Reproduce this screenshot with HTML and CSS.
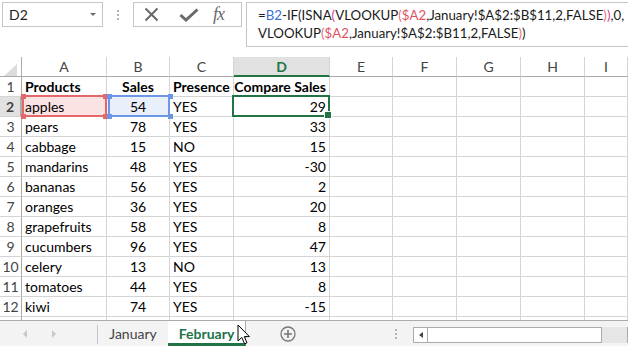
FILE: index.html
```html
<!DOCTYPE html>
<html lang="en">
<head>
    <meta charset="UTF-8">
    <title>February - Compare Sales</title>
    <link rel="stylesheet" href="styles.css">
</head>
<body>
    <!-- Name box + formula bar -->
    <div class="topbar">
        <div class="namebox">
            <span>D2</span>
            <span class="caret"></span>
        </div>
        <div class="grip"><i></i><i></i><i></i></div>
        <div class="fx-buttons">
            <svg class="ico-x" width="15" height="15" viewBox="0 0 15 15"><path d="M1.5 1.5 L13.5 13.5 M13.5 1.5 L1.5 13.5" stroke="#6a6a6a" stroke-width="2" fill="none"/></svg>
            <svg class="ico-ok" width="20" height="14" viewBox="0 0 20 14"><path d="M1.5 7 L7 12 L18.5 1.5" stroke="#6a6a6a" stroke-width="3" fill="none" stroke-linejoin="miter"/></svg>
            <span class="fx">fx</span>
        </div>
        <div class="formula">=<span class="ref-b">B2</span>-IF(ISNA<span class="p1">(</span>VLOOKUP<span class="p2">(</span><span class="ref-a">$A2</span>,January!$A$2:$B$11,2,FALSE<span class="p2">)</span><span class="p1">)</span>,0,<br>VLOOKUP<span class="p2">(</span><span class="ref-a">$A2</span>,January!$A$2:$B11,2,FALSE<span class="p2">)</span>)</div>
    </div>

    <!-- Worksheet grid -->
    <div class="sheet">
        <div class="row head">
            <div class="corner"><span class="tri"></span></div>
            <div>A</div><div>B</div><div>C</div><div class="hd-active">D</div><div>E</div><div>F</div><div>G</div><div>H</div><div>I</div>
        </div>
        <div class="row bold">
            <div>1</div><div>Products</div><div class="m">Sales</div><div>Presence</div><div class="n">Compare Sales</div><div></div><div></div><div></div><div></div><div></div>
        </div>
        <div class="row">
            <div class="hd-row">2</div><div class="sel-red">apples</div><div class="m sel-blue">54</div><div>YES</div><div class="n sel-green">29</div><div></div><div></div><div></div><div></div><div></div>
        </div>
        <div class="row">
            <div>3</div><div>pears</div><div class="m">78</div><div>YES</div><div class="n">33</div><div></div><div></div><div></div><div></div><div></div>
        </div>
        <div class="row">
            <div>4</div><div>cabbage</div><div class="m">15</div><div>NO</div><div class="n">15</div><div></div><div></div><div></div><div></div><div></div>
        </div>
        <div class="row">
            <div>5</div><div>mandarins</div><div class="m">48</div><div>YES</div><div class="n">-30</div><div></div><div></div><div></div><div></div><div></div>
        </div>
        <div class="row">
            <div>6</div><div>bananas</div><div class="m">56</div><div>YES</div><div class="n">2</div><div></div><div></div><div></div><div></div><div></div>
        </div>
        <div class="row">
            <div>7</div><div>oranges</div><div class="m">36</div><div>YES</div><div class="n">20</div><div></div><div></div><div></div><div></div><div></div>
        </div>
        <div class="row">
            <div>8</div><div>grapefruits</div><div class="m">58</div><div>YES</div><div class="n">8</div><div></div><div></div><div></div><div></div><div></div>
        </div>
        <div class="row">
            <div>9</div><div>cucumbers</div><div class="m">96</div><div>YES</div><div class="n">47</div><div></div><div></div><div></div><div></div><div></div>
        </div>
        <div class="row">
            <div>10</div><div>celery</div><div class="m">13</div><div>NO</div><div class="n">13</div><div></div><div></div><div></div><div></div><div></div>
        </div>
        <div class="row">
            <div>11</div><div>tomatoes</div><div class="m">44</div><div>YES</div><div class="n">8</div><div></div><div></div><div></div><div></div><div></div>
        </div>
        <div class="row">
            <div>12</div><div>kiwi</div><div class="m">74</div><div>YES</div><div class="n">-15</div><div></div><div></div><div></div><div></div><div></div>
        </div>
        <!-- row 13 is only peeking out under the tab bar -->
        <div class="row">
            <div></div><div></div><div></div><div></div><div></div><div></div><div></div><div></div><div></div><div></div>
        </div>
    </div>

    <!-- Sheet tabs + horizontal scroll -->
    <div class="tabbar">
        <div class="tab-nav">
            <span class="arr-left"></span>
            <span class="arr-right"></span>
            <span class="sep"></span>
        </div>
        <div class="tab">January</div>
        <div class="tab active">February</div>
        <div class="tab-add">
            <svg width="16" height="16" viewBox="0 0 16 16"><circle cx="8" cy="8" r="7" stroke="#777" stroke-width="1.3" fill="none"/><path d="M8 4 V12 M4 8 H12" stroke="#777" stroke-width="1.6"/></svg>
        </div>
        <div class="grip small"><i></i><i></i><i></i></div>
        <div class="hscroll">
            <span class="btn-left"><span class="tri-left"></span></span>
            <span class="thumb"></span>
            <span class="track"></span>
            <span class="btn-right"></span>
        </div>
    </div>

    <svg class="cursor" width="14" height="22" viewBox="0 0 14 22"><path d="M1 1 L1 17 L4.8 13.4 L7.6 19.8 L10 18.8 L7.3 12.6 L12.4 12.6 Z" fill="#fff" stroke="#000" stroke-width="1"/></svg>
</body>
</html>
```

FILE: styles.css
```css
* {
    margin: 0;
    padding: 0;
    box-sizing: border-box;
}

body {
    font-family: Lato, "Liberation Sans", sans-serif;
    font-size: 14px;
    color: #000;
    background: #fff;
    width: 628px;
    height: 346px;
    overflow: hidden;
    position: relative;
}

/* ---------- top bar ---------- */

.topbar {
    display: flex;
    align-items: flex-start;
    height: 57px;
    padding: 2px 0 0 2px;
}

.topbar > * {
    flex-shrink: 0;
}

.namebox {
    width: 101px;
    height: 25px;
    border: 1px solid #c6c6c6;
    display: flex;
    align-items: center;
    justify-content: space-between;
    padding: 0 6px 0 6px;
    color: #222;
}

.caret {
    width: 0;
    height: 0;
    border-left: 3px solid transparent;
    border-right: 3px solid transparent;
    border-top: 3px solid #6d6d6d;
}

.grip {
    width: 30px;
    height: 25px;
    display: flex;
    flex-direction: column;
    align-items: center;
    justify-content: center;
    gap: 2px;
}

.grip i {
    width: 2px;
    height: 2px;
    background: #b3b3b3;
}

.fx-buttons {
    width: 109px;
    height: 25px;
    border: 1px solid #c6c6c6;
    display: flex;
    align-items: center;
    padding-left: 10px;
}

.ico-x {
    margin-right: 20px;
}

.ico-ok {
    margin-right: 14px;
}

.fx {
    font-family: "Liberation Serif", serif;
    font-style: italic;
    font-size: 18px;
    color: #6a6a6a;
    letter-spacing: -1px;
}

.formula {
    flex: 1 1 auto;
    height: 45px;
    margin-left: 4px;
    border: 1px solid #c6c6c6;
    border-right: none;
    padding: 3px 0 0 11px;
    font-size: 13.25px;
    line-height: 18px;
    white-space: nowrap;
    overflow: hidden;
    color: #1a1a1a;
}

.ref-b { color: #3b6fd6; }
.ref-a { color: #e0525e; }
.p1 { color: #c9489a; }
.p2 { color: #e9707c; }

/* ---------- grid ---------- */

.sheet {
    height: 263px;
    overflow: hidden;
}

.row {
    display: grid;
    grid-template-columns: 22px 85px 63px 64px 96px 63px 64px 64px 64px 1fr;
    height: 20px;
}

.row > div {
    border-right: 1px solid #d4d4d4;
    border-bottom: 1px solid #d4d4d4;
    display: flex;
    align-items: center;
    padding: 0 3px;
    white-space: nowrap;
}

.row > div:first-child {
    justify-content: center;
    padding: 0;
    color: #444;
    border-right-color: #ababab;
}

.head > div {
    justify-content: center;
    color: #444;
    border-bottom-color: #ababab;
}

.head > .corner {
    justify-content: flex-end;
    align-items: flex-end;
    padding: 0 2px 3px 0;
}

.tri {
    width: 0;
    height: 0;
    border-left: 13px solid transparent;
    border-bottom: 12px solid #dcdcdc;
}

.head > .hd-active {
    background: #e1e1e1;
    color: #217346;
    font-weight: bold;
    border-bottom: 2px solid #217346;
}

.row > .hd-row {
    background: #e1e1e1;
    color: #217346;
    font-weight: bold;
    border-right: 2px solid #217346;
}

.bold > div {
    font-weight: bold;
}

.bold > div:first-child {
    font-weight: normal;
}

.row > .m { justify-content: center; }
.row > .n { justify-content: flex-end; }

/* formula reference highlights */

.sel-red,
.sel-blue,
.sel-green {
    position: relative;
}

.sel-red { background: #fce3e3; }
.sel-blue { background: #e9effb; }

.sel-red::after,
.sel-blue::after {
    content: "";
    position: absolute;
    top: -2px;
    left: 0;
    right: -1px;
    bottom: -1px;
    border: 2px solid #e4676b;
}

.sel-blue::after {
    left: 1px;
    border-color: #6b97e6;
}

.sel-red::before,
.sel-blue::before {
    content: "";
    position: absolute;
    z-index: 1;
    top: -3px;
    left: -1px;
    width: 5px;
    height: 5px;
    background: #e4676b;
    box-shadow: 82px 0 #e4676b, 0 20px #e4676b, 82px 20px #e4676b;
}

.sel-blue::before {
    left: 0;
    background: #6b97e6;
    box-shadow: 61px 0 #6b97e6, 0 20px #6b97e6, 61px 20px #6b97e6;
}

.sel-green::after {
    content: "";
    position: absolute;
    top: -2px;
    left: -2px;
    right: -1px;
    bottom: -1px;
    border: 2px solid #217346;
}

.sel-green::before {
    content: "";
    position: absolute;
    z-index: 1;
    right: -3px;
    bottom: -3px;
    width: 6px;
    height: 6px;
    background: #217346;
    border: 1px solid #fff;
}

/* ---------- sheet tabs ---------- */

.tabbar {
    height: 26px;
    border-top: 1px solid #ababab;
    background: #f3f3f3;
    display: flex;
    color: #444;
}

.tabbar > * {
    flex-shrink: 0;
}

.tab-nav {
    width: 98px;
    display: flex;
    align-items: center;
    padding-left: 23px;
}

.arr-left,
.arr-right {
    width: 0;
    height: 0;
    border-top: 4px solid transparent;
    border-bottom: 4px solid transparent;
}

.arr-left {
    border-right: 4px solid #c8c8c8;
    margin-right: 25px;
}

.arr-right {
    border-left: 4px solid #c8c8c8;
}

.sep {
    width: 1px;
    height: 19px;
    background: #c6c6c6;
    margin-left: auto;
    margin-top: 2px;
}

.tab {
    display: flex;
    align-items: center;
    justify-content: center;
    width: 70px;
    padding-bottom: 1px;
}

.tab.active {
    width: 78px;
    background: #fff;
    color: #217346;
    font-weight: bold;
    border-right: 1px solid #ababab;
    border-bottom: 3px solid #217346;
    padding-bottom: 0;
    padding-top: 2px;
}

.tab-add {
    width: 84px;
    display: flex;
    align-items: center;
    justify-content: center;
}

.grip.small {
    width: 12px;
    height: 25px;
    margin-left: 60px;
    margin-right: 11px;
}

.hscroll {
    display: flex;
    height: 16px;
    margin-top: 6px;
}

.hscroll > span {
    flex-shrink: 0;
}

.btn-left {
    width: 15px;
    height: 16px;
    background: #fff;
    border: 1px solid #ababab;
    display: flex;
    align-items: center;
    justify-content: center;
}

.tri-left {
    width: 0;
    height: 0;
    border-top: 3px solid transparent;
    border-bottom: 3px solid transparent;
    border-right: 4px solid #444;
}

.thumb {
    width: 174px;
    height: 16px;
    background: #fff;
    border: 1px solid #ababab;
    border-left: none;
}

.track {
    width: 25px;
    height: 16px;
    background: #e6e6e6;
}

.btn-right {
    width: 15px;
    height: 16px;
    border: 1px solid #ababab;
    background: #fff;
}

.cursor {
    position: absolute;
    left: 237px;
    top: 324px;
}
```
